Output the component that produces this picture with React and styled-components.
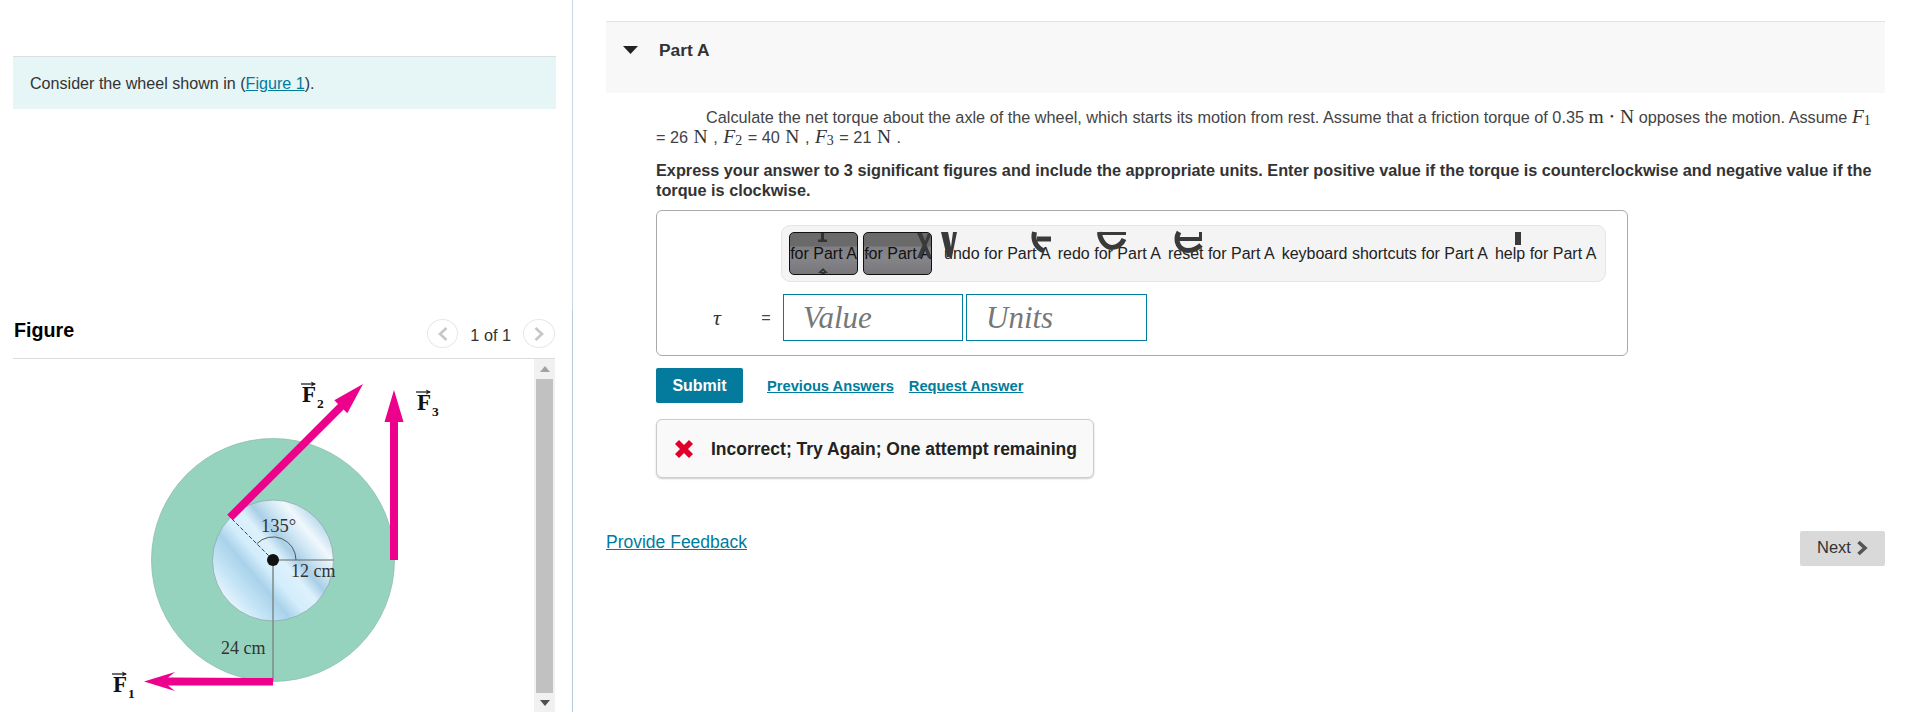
import React from 'react';
import styled, { createGlobalStyle } from 'styled-components';

const Global = createGlobalStyle`
  html, body { margin: 0; padding: 0; background: #fff; }
  body { font-family: "Liberation Sans", Arial, sans-serif; font-size: 16.25px; color: #333; }
`;

const Page = styled.div`
  display: flex;
  width: 1915px;
  height: 712px;
  overflow: hidden;
`;

const LeftPane = styled.aside`
  width: 543px;
  flex: none;
  padding: 56px 16px 0 13px;
  display: flex;
  flex-direction: column;
  height: 656px;
`;

const Divider = styled.div`
  width: 1px;
  flex: none;
  background: linear-gradient(#c9d8e6 0, #c9d8e6 310px, #b6cade 310px);
`;

const Banner = styled.div`
  flex: none;
  border-top: 1px solid #d9dfe3;
  background: #e6f5f6;
  padding: 0 0 0 17px;
  height: 52px;
  display: flex;
  align-items: center;
  line-height: 20px;
  font-size: 16.1px;
`;

const A = styled.a`
  color: #007c9d;
  text-decoration: underline;
`;

const FigureHead = styled.div`
  margin: 209px 1px 0 0;
  height: 40px;
  flex: none;
  border-bottom: 1px solid #dcdcdc;
  display: flex;
  align-items: flex-start;
`;

const FigureTitle = styled.h2`
  margin: 0 0 0 1px;
  font-size: 19.7px;
  font-weight: bold;
  line-height: 24px;
  color: #000;
  flex: 1;
`;

const Pager = styled.div`
  display: flex;
  align-items: center;
  height: 29px;
  margin-top: 1px;
`;

const PagerButton = styled.span`
  width: ${p => p.$w}px;
  height: 29px;
  border: 1px solid #e8e8e8;
  border-radius: 50%;
  box-sizing: border-box;
  display: flex;
  align-items: center;
  justify-content: center;
`;

const PagerText = styled.span`
  margin: 2px 12px 0;
  line-height: 20px;
`;

const FigureBody = styled.div`
  flex: 1;
  display: flex;
  min-height: 0;
  margin-right: 1px;
`;

const FigureCanvas = styled.div`
  flex: 1;
  overflow: hidden;
  padding-top: 1px;
`;

const Scrollbar = styled.div`
  width: 21px;
  flex: none;
  box-sizing: border-box;
  background: #f1f1f1;
  padding: 0 2px;
  display: flex;
  flex-direction: column;
  align-items: center;
`;

const ScrollButton = styled.div`
  height: ${p => p.$h}px;
  flex: none;
  display: flex;
  align-items: center;
  justify-content: center;
`;

const ScrollThumb = styled.div`
  flex: 1;
  width: 100%;
  background: #c1c1c1;
`;

const RightPane = styled.main`
  margin-left: 33px;
  width: 1279px;
  flex: none;
  padding-top: 21px;
`;

const PartHead = styled.div`
  border-top: 1px solid #e3e3e3;
  background: #f8f8f8;
  display: flex;
  align-items: flex-start;
  padding: 18px 0 0 17px;
  box-sizing: border-box;
  height: 72px;
`;

const Caret = styled.svg`
  width: 15px;
  height: 8px;
  margin: 6px 21px 0 0;
  flex: none;
`;

const PartTitle = styled.h3`
  margin: 0;
  font-size: 17.4px;
  line-height: 21px;
  font-weight: bold;
  color: #333;
`;

const PartBody = styled.div`
  padding: 14px 0 0 50px;
`;

const Para = styled.p`
  margin: 0;
  line-height: 20px;
  white-space: nowrap;
  color: #444;
`;

const Indent = styled.span`
  display: inline-block;
  width: 50px;
`;

const Math = styled.span`
  font-family: "Liberation Serif", "DejaVu Serif", serif;
  font-size: 19.5px;
  line-height: 1;
  padding: 0 ${p => p.$pad || 0}px;
  font-style: ${p => (p.$italic ? 'italic' : 'normal')};
  color: #333;
`;

const Sub = styled.sub`
  font-size: 14px;
  line-height: 0;
  font-style: normal;
  vertical-align: -2px;
`;

const Instruction = styled.p`
  margin: 13px 0 10px;
  font-weight: bold;
  line-height: 20px;
  white-space: nowrap;
  color: #333;
`;

const AnswerBox = styled.div`
  width: 972px;
  height: 146px;
  box-sizing: border-box;
  border: 1px solid #aaa;
  border-radius: 6px;
  padding: 14px 21px 0 124px;
`;

const Toolbar = styled.div`
  height: 57px;
  box-sizing: border-box;
  border: 1px solid #e5e5e5;
  border-radius: 9px;
  background: #f4f4f4;
  padding: 6px 0 0 7px;
  display: flex;
  align-items: flex-start;
  gap: 5px;
  font-size: 16px;
`;

const ToolButton = styled.div`
  width: 69px;
  height: 43px;
  box-sizing: border-box;
  border: 1px solid #111;
  border-radius: 5px;
  background: linear-gradient(#6a6a6a 0, #6a6a6a 13px, #808084 14px, #86868a 60%, #77777b 100%);
  display: flex;
  align-items: center;
  justify-content: center;
  color: #111;
  white-space: nowrap;
  position: relative;
  overflow: hidden;
`;

const ToolLabel = styled.div`
  height: 43px;
  display: flex;
  align-items: center;
  color: #222;
  white-space: nowrap;
  position: relative;
  margin-left: ${p => p.$ml || 0}px;
  padding: 0 1px;
`;

const Glyph = styled.svg`
  position: absolute;
  top: ${p => p.$top ?? 0}px;
  left: ${p => p.$left}px;
  overflow: visible;
  pointer-events: none;
`;

const InputRow = styled.div`
  display: flex;
  align-items: center;
  margin-top: 12px;
  margin-left: -77px;
  height: 47px;
`;

const Tau = styled.span`
  width: 26px;
  text-align: center;
  font-family: "Liberation Serif", serif;
  font-style: italic;
  font-size: 22px;
  color: #333;
`;

const Eq = styled.span`
  width: 20px;
  margin: 0 7px 0 26px;
  text-align: center;
  color: #444;
`;

const Field = styled.input`
  height: 47px;
  width: ${p => p.$w}px;
  margin-right: 3px;
  box-sizing: border-box;
  border: 1px solid #007c9d;
  border-radius: 0;
  outline: none;
  padding: 0 0 0 19px;
  background: #fff;
  font-family: "Liberation Serif", serif;
  font-style: italic;
  font-size: 31px;
  &::placeholder { color: #777; opacity: 1; }
`;

const Actions = styled.div`
  display: flex;
  align-items: center;
  margin-top: 12px;
  height: 35px;
`;

const Submit = styled.button`
  width: 87px;
  height: 35px;
  border: 0;
  border-radius: 2px;
  background: #047a9c;
  color: #fff;
  font: bold 16px "Liberation Sans", Arial, sans-serif;
  padding: 0;
  margin-right: 24px;
`;

const ActionLink = styled(A)`
  font-size: 14.7px;
  font-weight: bold;
  margin-right: 15px;
`;

const Feedback = styled.div`
  margin-top: 16px;
  width: 438px;
  height: 59px;
  box-sizing: border-box;
  display: flex;
  align-items: center;
  background: #f9f9f9;
  border: 1px solid #ccc;
  border-radius: 6px;
  box-shadow: 0 1px 2px rgba(0, 0, 0, 0.2);
  padding: 1px 0 0 18px;
  font-weight: bold;
  font-size: 17.5px;
  color: #222;
`;

const XMark = styled.svg`
  width: 18px;
  height: 18px;
  flex: none;
  margin-right: 18px;
`;

const FootRow = styled.div`
  display: flex;
  justify-content: space-between;
  align-items: flex-start;
  margin-top: 53px;
`;

const FeedbackLink = styled(A)`
  font-size: 17.5px;
  line-height: 22px;
`;

const Next = styled.button`
  width: 85px;
  height: 35px;
  border: 0;
  border-radius: 2px;
  background: #d9d9d9;
  color: #333;
  font: 16.5px "Liberation Sans", Arial, sans-serif;
  display: flex;
  align-items: center;
  justify-content: center;
  gap: 5px;
  padding: 0 0 2px;
`;

const Chev = ({ dir, color = '#c6c6c6', w = 12, h = 18, sw = 2.6 }) => (
  <svg width={w} height={h} viewBox="0 0 12 18">
    <path d={dir === 'left' ? 'M9.5 3 3 9l6.5 6' : 'M2.5 3 9 9l-6.5 6'} fill="none" stroke={color} strokeWidth={sw} />
  </svg>
);

const VecLabel = ({ x, y, sub }) => (
  <g fontFamily="'Liberation Serif', serif" fontWeight="bold" fill="#111">
    <text x={x} y={y} fontSize="23">F</text>
    <text x={x + 15} y={y + 6} fontSize="13.5">{sub}</text>
    <path d={`M${x - 1} ${y - 18}H${x + 13}`} stroke="#222" strokeWidth="1.3" />
    <path d={`M${x + 14} ${y - 18}l-5 -2.5l1 2.5l-1 2.5z`} fill="#222" />
  </g>
);

const Wheel = () => (
  <svg width="521" height="353" viewBox="13 359 521 353">
    <defs>
      <linearGradient id="disc" x1="0.12" y1="0.82" x2="0.88" y2="0.18">
        <stop offset="0" stopColor="#e3f3fc" />
        <stop offset="0.14" stopColor="#c3e4f6" />
        <stop offset="0.3" stopColor="#a9d2ea" />
        <stop offset="0.42" stopColor="#d3edfb" />
        <stop offset="0.56" stopColor="#ddf1fc" />
        <stop offset="0.66" stopColor="#a9cfe6" />
        <stop offset="0.78" stopColor="#d2e8f5" />
        <stop offset="0.88" stopColor="#f0f8fc" />
        <stop offset="1" stopColor="#bedcee" />
      </linearGradient>
    </defs>
    <circle cx="273" cy="559" r="121.5" fill="#96d3bf" stroke="#88b9a9" strokeWidth="0.7" />
    <circle cx="273" cy="559.5" r="60.5" fill="url(#disc)" stroke="#8aa9a4" strokeWidth="0.8" />
    <path d="M273 559L230 516" stroke="#444" strokeWidth="1" strokeDasharray="4 2" />
    <path d="M273 559H333.5" stroke="#666" strokeWidth="1.2" />
    <path d="M273 559V680" stroke="#7d8a88" strokeWidth="1.5" />
    <path d="M296 559A23 23 0 0 0 256.7 542.7" fill="none" stroke="#555" strokeWidth="1" />
    <circle cx="273" cy="559" r="6" fill="#111" />
    <path d="M232.8 519.3L227.2 513.7L338 403L334.3 399.3L363 383L347.3 412.3L343.6 408.6Z" fill="#ec008c" />
    <path d="M390 559V421L384.5 421L394 389L403.5 421L398 421V559Z" fill="#ec008c" />
    <path d="M273 677V684.5H168L175 690L144 680.5L175 671L168 676.5Z" fill="#ec008c" />
    <VecLabel x={302} y={401} sub="2" />
    <VecLabel x={417} y={409} sub="3" />
    <VecLabel x={113} y={691} sub="1" />
    <g fontFamily="'Liberation Serif', serif" fontSize="18" fill="#333">
      <text x="261" y="531" fontSize="18.5">135°</text>
      <text x="291" y="576">12 cm</text>
      <text x="221" y="653">24 cm</text>
    </g>
  </svg>
);

export default function App() {
  return (
    <Page>
      <Global />
      <LeftPane>
        <Banner>
          <span>Consider the wheel shown in (<A href="#">Figure 1</A>).</span>
        </Banner>
        <FigureHead>
          <FigureTitle>Figure</FigureTitle>
          <Pager>
            <PagerButton $w={31}><Chev dir="left" /></PagerButton>
            <PagerText>1 of 1</PagerText>
            <PagerButton $w={32}><Chev dir="right" /></PagerButton>
          </Pager>
        </FigureHead>
        <FigureBody>
          <FigureCanvas><Wheel /></FigureCanvas>
          <Scrollbar>
            <ScrollButton $h={20}>
              <svg width="10" height="6" viewBox="0 0 10 6"><path d="M5 0l5 6H0z" fill="#a3a3a3" /></svg>
            </ScrollButton>
            <ScrollThumb />
            <ScrollButton $h={19}>
              <svg width="10" height="6" viewBox="0 0 10 6"><path d="M0 0h10L5 6z" fill="#505050" /></svg>
            </ScrollButton>
          </Scrollbar>
        </FigureBody>
      </LeftPane>
      <Divider />
      <RightPane>
        <PartHead>
          <Caret viewBox="0 0 15 8"><path d="M0 0h15L7.5 8z" fill="#222" /></Caret>
          <PartTitle>Part A</PartTitle>
        </PartHead>
        <PartBody>
          <Para>
            <Indent />Calculate the net torque about the axle of the wheel, which starts its motion from rest. Assume that a friction torque of 0.35 <Math>m ⋅ N</Math> opposes the motion. Assume <Math $italic>F<Sub>1</Sub></Math>
            <br />
            = 26 <Math $pad={1}>N</Math> , <Math $pad={1} $italic>F<Sub>2</Sub></Math> = 40 <Math $pad={1}>N</Math> , <Math $pad={1} $italic>F<Sub>3</Sub></Math> = 21 <Math $pad={1}>N</Math> .
          </Para>
          <Instruction>
            Express your answer to 3 significant figures and include the appropriate units. Enter positive value if the torque is counterclockwise and negative value if the
            <br />
            torque is clockwise.
          </Instruction>
          <AnswerBox>
            <Toolbar>
              <ToolButton>
                for Part A
                <Glyph $left={28} width="9" height="9" viewBox="0 0 9 9"><path d="M3 0h3v6.5h3V9H0V6.5h3z" fill="#333" /></Glyph>
                <Glyph $left={28} $top={35} width="10" height="7" viewBox="0 0 10 7"><path d="M5 0l5 5H7v2H3V5H0zM5 2.5L3.5 4h3z" fill="#333" fillRule="evenodd" /></Glyph>
              </ToolButton>
              <ToolButton>
                for Part A
                <Glyph $left={1} $top={20} width="5" height="2" viewBox="0 0 5 2"><path d="M0 0h5v2H0z" fill="#444" /></Glyph>
                <Glyph $left={53} width="15" height="25" viewBox="0 0 15 25"><path d="M0 0h5l3 8 3-8h4L9.5 12 15 25h-4L7.5 16 4 25H0l5.5-13z" fill="#3a3a3a" /></Glyph>
              </ToolButton>
              <ToolLabel $ml={6}>
                undo for Part A
                <Glyph $left={-2} width="16" height="25" viewBox="0 0 16 25"><path d="M0 0h7l3 15 2-15h4L11 25H6z" fill="#3a3a3a" /></Glyph>
                <Glyph $left={88} width="20" height="21" viewBox="0 0 20 21"><path d="M3.5 0C1.5 8 5 16 13 19M6 7H20" fill="none" stroke="#3a3a3a" strokeWidth="5" /></Glyph>
              </ToolLabel>
              <ToolLabel>
                redo for Part A
                <Glyph $left={40} width="29" height="18" viewBox="0 0 29 18"><path d="M2.5 0C3 9 9 15.5 15 15.5C20 15.5 25 12 27 7" fill="none" stroke="#3a3a3a" strokeWidth="5" /><path d="M5 0H29V3H5z" fill="#3a3a3a" /></Glyph>
              </ToolLabel>
              <ToolLabel>
                reset for Part A
                <Glyph $left={7} width="28" height="21" viewBox="0 0 28 21"><path d="M5 0C0 9 5 18.5 14 18.5C20 18.5 24 16 27 13" fill="none" stroke="#3a3a3a" strokeWidth="5" /><path d="M4 5H28V9H4zM25 0H28V9H25z" fill="#3a3a3a" /></Glyph>
              </ToolLabel>
              <ToolLabel>keyboard shortcuts for Part A</ToolLabel>
              <ToolLabel>
                help for Part A
                <Glyph $left={21} width="6" height="13" viewBox="0 0 6 13"><path d="M0 0h6v13H0z" fill="#3a3a3a" /></Glyph>
              </ToolLabel>
            </Toolbar>
            <InputRow>
              <Tau>τ</Tau>
              <Eq>=</Eq>
              <Field $w={180} placeholder="Value" />
              <Field $w={181} placeholder="Units" />
            </InputRow>
          </AnswerBox>
          <Actions>
            <Submit>Submit</Submit>
            <ActionLink href="#">Previous Answers</ActionLink>
            <ActionLink href="#">Request Answer</ActionLink>
          </Actions>
          <Feedback>
            <XMark viewBox="0 0 18 18">
              <path d="M4 0l5 5 5-5 4 4-5 5 5 5-4 4-5-5-5 5-4-4 5-5-5-5z" fill="#e0002a" />
            </XMark>
            Incorrect; Try Again; One attempt remaining
          </Feedback>
        </PartBody>
        <FootRow>
          <FeedbackLink href="#">Provide Feedback</FeedbackLink>
          <Next>Next <Chev dir="right" color="#555" w={12} h={18} sw={3.6} /></Next>
        </FootRow>
      </RightPane>
    </Page>
  );
}
